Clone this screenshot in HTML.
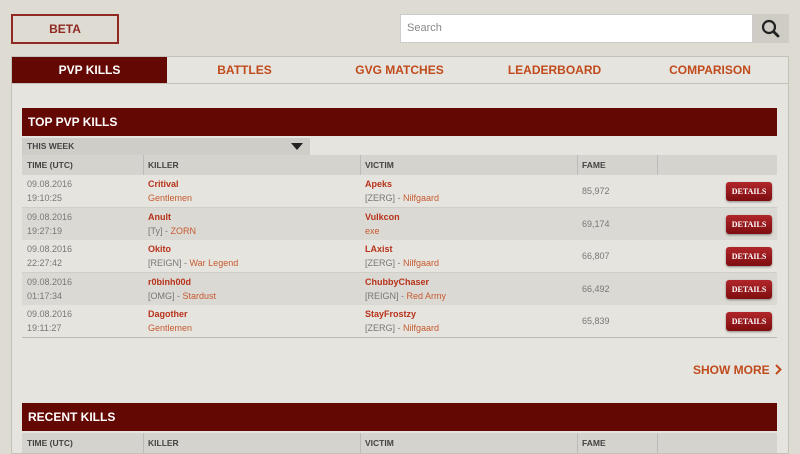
<!DOCTYPE html>
<html><head><meta charset="utf-8"><style>
*{margin:0;padding:0;box-sizing:border-box}
body{width:800px;height:446px;overflow:hidden;background:#dedbd3;font-family:"Liberation Sans",sans-serif;position:relative}
.abs{position:absolute}
.beta{left:11px;top:14px;width:108px;height:30px;border:2px solid #8e2a22;color:#8e2a22;font-weight:bold;font-size:12px;text-align:center;line-height:26px}
.search{left:400px;top:14px;width:353px;height:29px;background:#fff;border:1px solid #ccc;color:#888;font-size:11px;padding-left:6px;line-height:27px}
.sbtn{left:753px;top:14px;width:36px;height:29px;background:#cfccc6}
.nav{left:11px;top:56px;width:778px;height:28px;border:1px solid #c4c1ba;background:#e6e4de}
.tab{position:absolute;top:0;height:26px;line-height:26px;text-align:center;font-weight:bold;font-size:12px;color:#c04a1c}
.panel{left:11px;top:84px;width:778px;height:370px;background:#e6e4de;border:1px solid #c4c1ba;border-top:none}
.bar{left:22px;width:755px;height:28px;background:#640803;color:#fff;font-weight:bold;font-size:12px;line-height:28px;padding-left:6px}
.hdr{left:22px;width:755px;height:20px;background:#d5d3cd;font-size:8.5px;font-weight:bold;color:#444}
.hdr span{position:absolute;top:5px}
.hdr i{position:absolute;top:0;width:1px;height:20px;background:#bbb}
.row{left:22px;width:755px;height:32.5px;font-size:9px;color:#777;border-bottom:1px solid #d0cec8}
.row div{position:absolute;line-height:13.5px;top:3px}
.n{color:#b7321a;font-weight:bold}
.g{color:#c65a30}
.det{position:absolute;left:704px;top:7px;width:46px;height:19px;border-radius:3px;background:linear-gradient(#b0262a,#7e0d10);color:#fff;font-family:"Liberation Serif",serif;font-weight:bold;font-size:8px;line-height:19px;text-align:center;box-shadow:0 1px 2px rgba(0,0,0,.4)}
</style></head><body>
<div class="abs beta">BETA</div>
<div class="abs search">Search</div>
<div class="abs sbtn"><svg width="36" height="29"><circle cx="16" cy="13" r="6" fill="none" stroke="#222" stroke-width="2.2"/><line x1="20.5" y1="17.5" x2="25" y2="22" stroke="#222" stroke-width="2.8" stroke-linecap="round"/></svg></div>
<div class="abs nav">
<div class="tab" style="left:0;width:155px;background:#640803;color:#fff">PVP KILLS</div>
<div class="tab" style="left:155px;width:155px">BATTLES</div>
<div class="tab" style="left:310px;width:155px">GVG MATCHES</div>
<div class="tab" style="left:465px;width:155px">LEADERBOARD</div>
<div class="tab" style="left:620px;width:156px">COMPARISON</div>
</div>
<div class="abs panel"></div>
<div class="abs bar" style="top:108px">TOP PVP KILLS</div>
<div class="abs" style="left:22px;top:138px;width:288px;height:17px;background:#cfcdc7;font-size:8.5px;font-weight:bold;color:#444;line-height:17px;padding-left:5px">THIS WEEK<svg class="abs" style="left:269px;top:5px" width="12" height="7"><path d="M0 0H12L6 7Z" fill="#222"/></svg></div>
<div class="abs hdr" style="top:155px"><span style="left:5px">TIME (UTC)</span><i style="left:121px"></i><span style="left:126px">KILLER</span><i style="left:338px"></i><span style="left:343px">VICTIM</span><i style="left:555px"></i><span style="left:560px">FAME</span><i style="left:635px"></i></div>

<div class="abs row" style="top:175px;background:#e6e4de"><div style="left:5px">09.08.2016<br>19:10:25</div><div style="left:126px"><span class="n">Critival</span><br><span class="g">Gentlemen</span></div><div style="left:343px"><span class="n">Apeks</span><br>[ZERG] - <span class="g">Nilfgaard</span></div><div style="left:560px;top:10px">85,972</div><span class="det">DETAILS</span></div>
<div class="abs row" style="top:208px;background:#dbd9d3"><div style="left:5px">09.08.2016<br>19:27:19</div><div style="left:126px"><span class="n">Anult</span><br>[Ty] - <span class="g">ZORN</span></div><div style="left:343px"><span class="n">Vulkcon</span><br><span class="g">exe</span></div><div style="left:560px;top:10px">69,174</div><span class="det">DETAILS</span></div>
<div class="abs row" style="top:240px;background:#e6e4de"><div style="left:5px">09.08.2016<br>22:27:42</div><div style="left:126px"><span class="n">Okito</span><br>[REIGN] - <span class="g">War Legend</span></div><div style="left:343px"><span class="n">LAxist</span><br>[ZERG] - <span class="g">Nilfgaard</span></div><div style="left:560px;top:10px">66,807</div><span class="det">DETAILS</span></div>
<div class="abs row" style="top:273px;background:#dbd9d3"><div style="left:5px">09.08.2016<br>01:17:34</div><div style="left:126px"><span class="n">r0binh00d</span><br>[OMG] - <span class="g">Stardust</span></div><div style="left:343px"><span class="n">ChubbyChaser</span><br>[REIGN] - <span class="g">Red Army</span></div><div style="left:560px;top:10px">66,492</div><span class="det">DETAILS</span></div>
<div class="abs row" style="top:305px;background:#e6e4de;border-bottom:1px solid #bdbab3"><div style="left:5px">09.08.2016<br>19:11:27</div><div style="left:126px"><span class="n">Dagother</span><br><span class="g">Gentlemen</span></div><div style="left:343px"><span class="n">StayFrostzy</span><br>[ZERG] - <span class="g">Nilfgaard</span></div><div style="left:560px;top:10px">65,839</div><span class="det">DETAILS</span></div>

<div class="abs" style="left:693px;top:363px;font-size:12px;font-weight:bold;color:#c04a1c">SHOW MORE<svg style="margin-left:5px;vertical-align:-1px" width="7" height="11"><path d="M1 1L5.5 5.5L1 10" fill="none" stroke="#c04a1c" stroke-width="2"/></svg></div>
<div class="abs bar" style="top:403px">RECENT KILLS</div>
<div class="abs hdr" style="top:433px"><span style="left:5px">TIME (UTC)</span><i style="left:121px"></i><span style="left:126px">KILLER</span><i style="left:338px"></i><span style="left:343px">VICTIM</span><i style="left:555px"></i><span style="left:560px">FAME</span><i style="left:635px"></i></div>
</body></html>
